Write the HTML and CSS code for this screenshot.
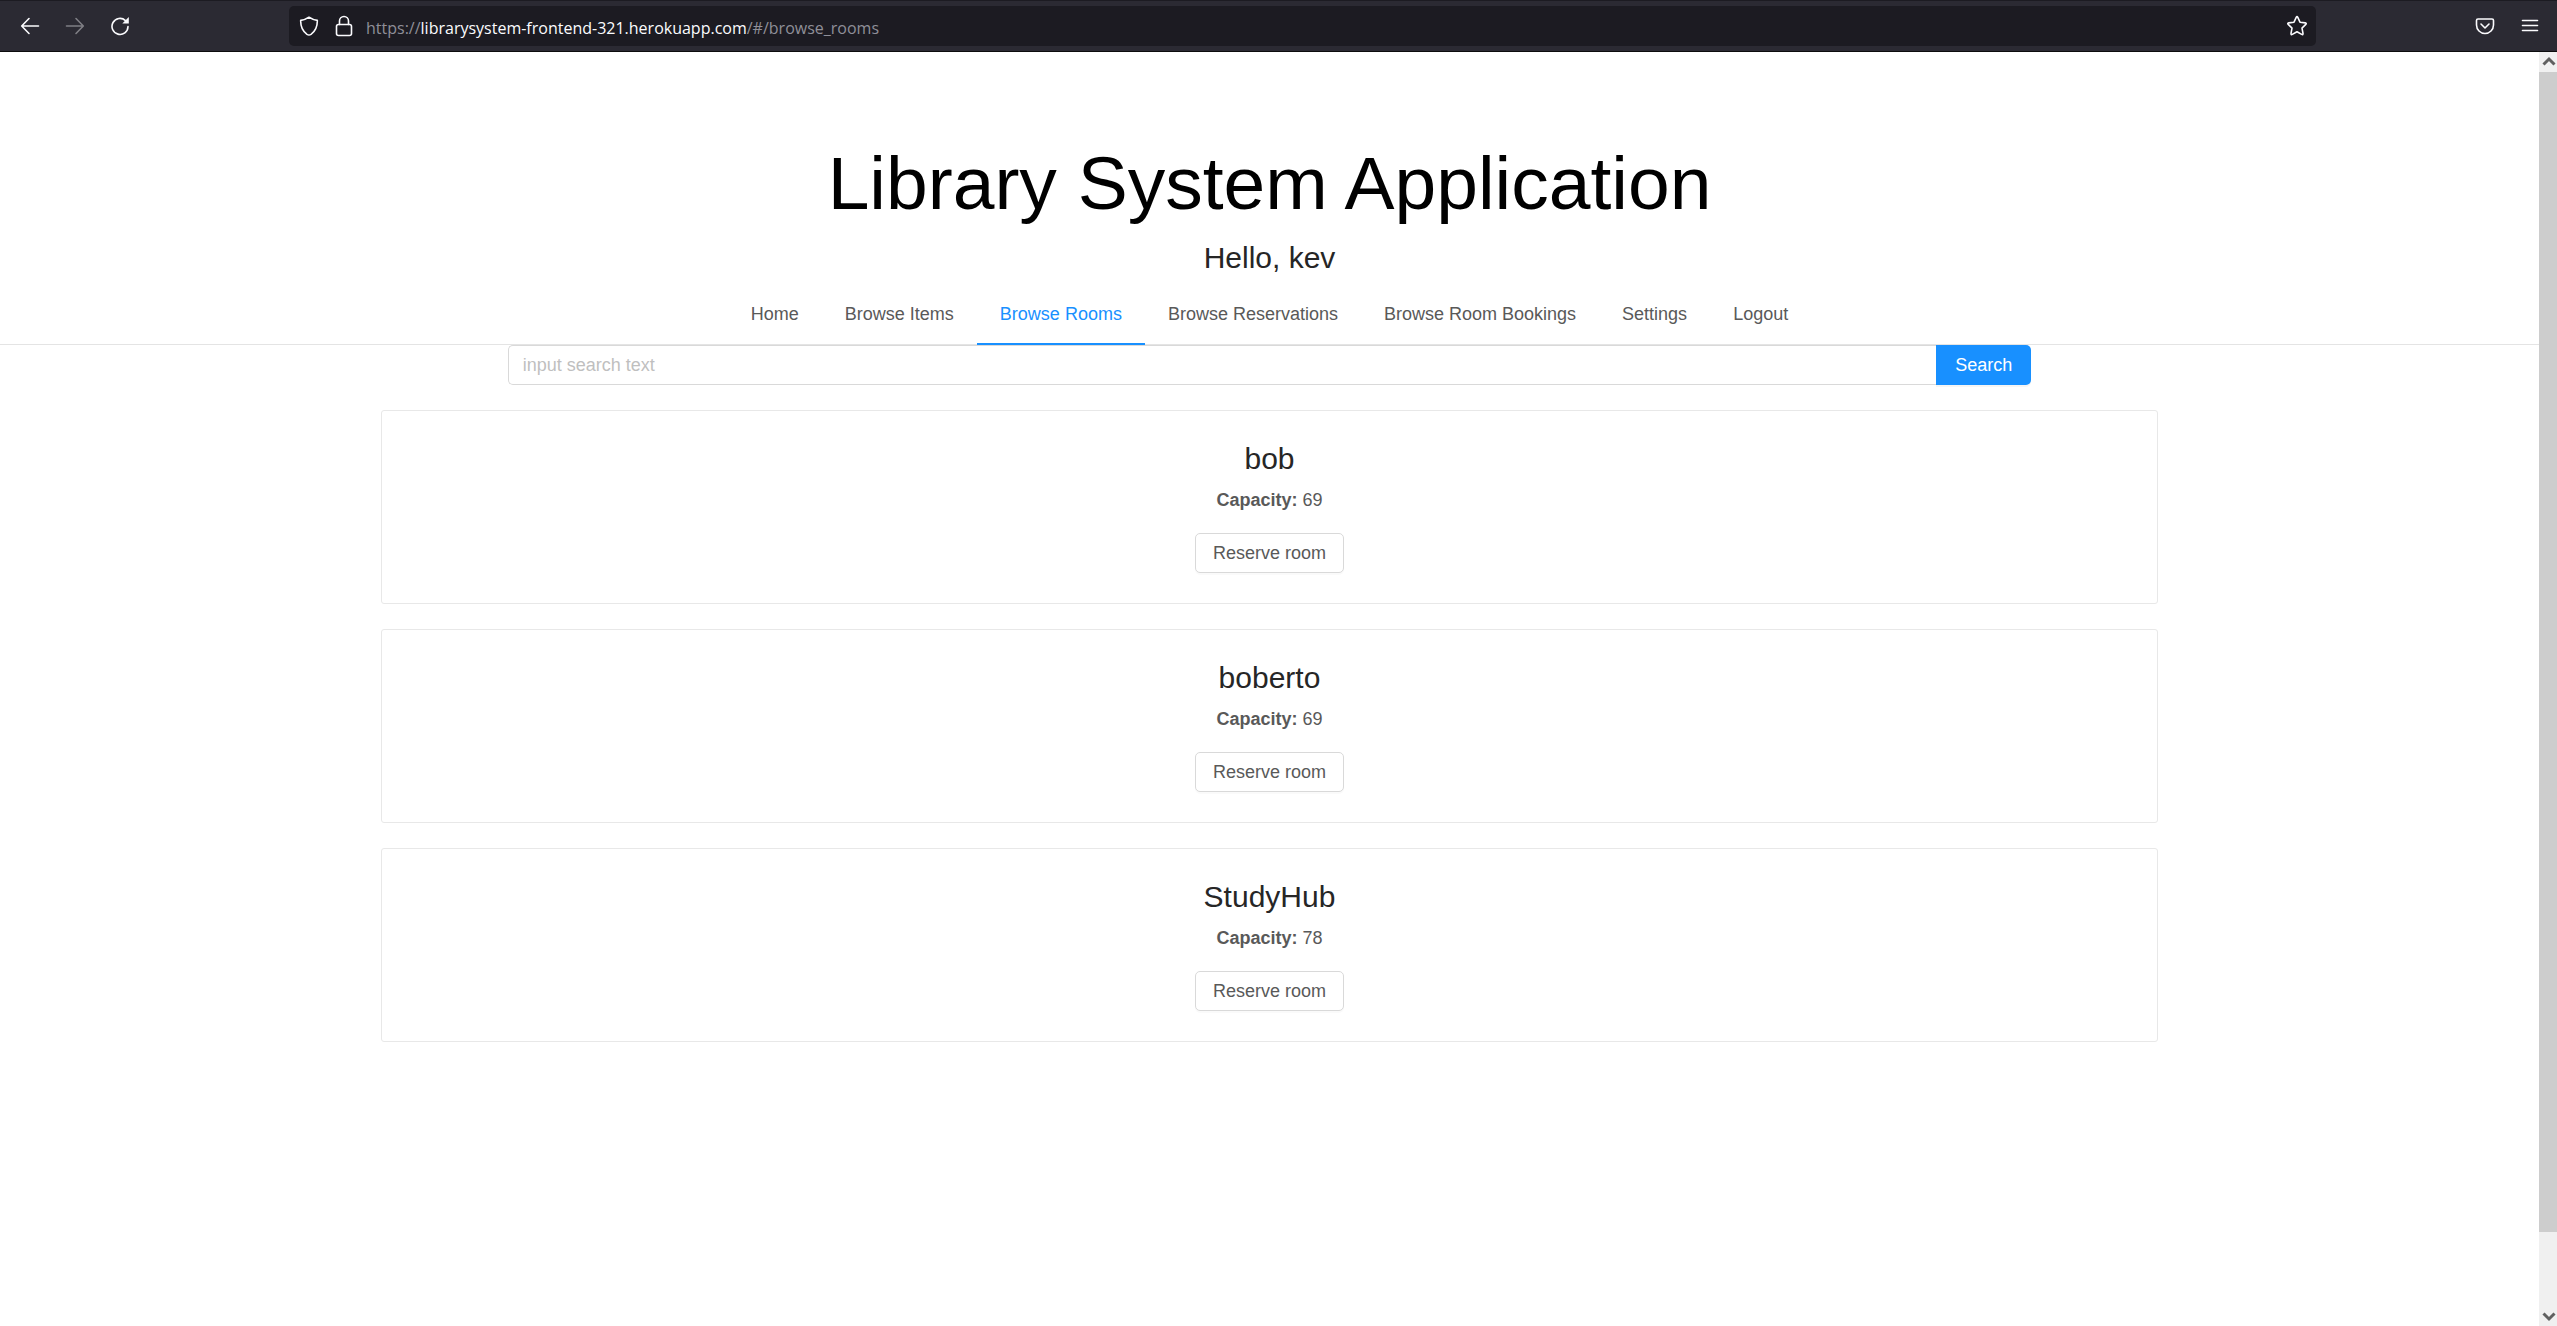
FILE: index.html
```html
<!DOCTYPE html>
<html lang="en">
<head>
<meta charset="utf-8">
<title>Library System Application</title>
<link rel="stylesheet" href="styles.css">
</head>
<body>
<div class="toolbar">
  <div class="nav-buttons">
    <button class="icon-button" aria-label="Back"><svg width="20" height="20" viewBox="0 0 20 20"><path d="M18.500 10H2M9 2.500 1.700 10 9 17.500"/></svg></button>
    <button class="icon-button dim" aria-label="Forward"><svg width="20" height="20" viewBox="0 0 20 20"><path d="M1.500 10H18M11 2.500 18.300 10 11 17.500"/></svg></button>
    <button class="icon-button" aria-label="Reload"><svg width="20" height="20" viewBox="0 0 20 20"><path d="M18 10.500A8 8 0 1 1 15.500 4.600"/><path class="solid" d="M18.800 1v6.500h-6.500z"/></svg></button>
  </div>
  <div class="address">
    <svg width="20" height="20" viewBox="0 0 20 20"><path d="M10 1.200C12.500 3 15 4 18.300 4.400C18.500 10.500 16.500 15 12 18.300Q10 19.600 8 18.300C3.500 15 1.500 10.500 1.700 4.400C5 4 7.500 3 10 1.200z"/></svg>
    <svg class="lock" width="20" height="22" viewBox="0 0 20 22"><rect x="2.500" y="9.500" width="15" height="11" rx="2"/><path d="M5.500 9.500V6a4.500 4.500 0 0 1 9 0v3.500"/></svg>
    <p class="url">https://<span class="host">librarysystem-frontend-321.herokuapp.com</span>/#/browse_rooms</p>
    <svg width="22" height="22" viewBox="0 0 22 22"><path d="M10.200 2.300q.8-1.500 1.600 0l2.200 4.900 5.300.7q1.600.3.500 1.500l-3.800 3.700 1 5.300q.2 1.700-1.300 1L11 16.800l-4.700 2.600q-1.500.7-1.300-1l1-5.300-3.800-3.700q-1.100-1.200.5-1.500l5.300-.7z"/></svg>
  </div>
  <div class="tools">
    <button class="icon-button" aria-label="Save to Pocket"><svg width="20" height="20" viewBox="0 0 20 20"><path d="M3 3h14q1.500 0 1.500 1.500V9a8.500 8.500 0 0 1-17 0V4.500Q1.500 3 3 3zM6 8l4 4 4-4"/></svg></button>
    <button class="icon-button" aria-label="Menu"><svg width="20" height="20" viewBox="0 0 20 20"><path d="M2.500 4.500h15M2.500 9.500h15M2.500 14.500h15"/></svg></button>
  </div>
</div>
<div class="viewport">
  <main class="page">
    <header>
      <h1>Library System Application</h1>
      <h2>Hello, kev</h2>
      <nav class="menu">
        <a href="#/">Home</a>
        <a href="#/browse_items">Browse Items</a>
        <a class="active" href="#/browse_rooms">Browse Rooms</a>
        <a href="#/browse_reservations">Browse Reservations</a>
        <a href="#/browse_room_bookings">Browse Room Bookings</a>
        <a href="#/settings">Settings</a>
        <a href="#/logout">Logout</a>
      </nav>
    </header>
    <form class="search">
      <input type="text" placeholder="input search text" aria-label="Search rooms">
      <button type="button">Search</button>
    </form>
    <section class="rooms">
      <article class="card">
        <h2>bob</h2>
        <p><strong>Capacity:</strong> 69</p>
        <button type="button">Reserve room</button>
      </article>
      <article class="card">
        <h2>boberto</h2>
        <p><strong>Capacity:</strong> 69</p>
        <button type="button">Reserve room</button>
      </article>
      <article class="card">
        <h2>StudyHub</h2>
        <p><strong>Capacity:</strong> 78</p>
        <button type="button">Reserve room</button>
      </article>
    </section>
  </main>
  <div class="scrollbar">
    <svg width="18" height="20" viewBox="0 0 18 20"><path d="M4.500 12.500 10 7l5.500 5.500"/></svg>
    <div class="thumb"></div>
    <div class="track"></div>
    <svg width="18" height="20" viewBox="0 0 18 20"><path d="M4.500 7.500 10 13l5.500-5.500"/></svg>
  </div>
</div>
</body>
</html>
```
FILE: styles.css
```css
* {
  box-sizing: border-box;
}

body {
  margin: 0;
  min-height: 100vh;
  display: flex;
  flex-direction: column;
  background: #fff;
  color: #595959;
  font: 18px/28px "Liberation Sans", Arial, sans-serif;
}

h1, h2, p {
  margin: 0;
}

button, input {
  font: inherit;
}

/* Browser toolbar */
.toolbar {
  display: flex;
  align-items: center;
  height: 52px;
  border-top: 1px solid #1c1b22;
  border-bottom: 1px solid #0c0c0d;
  background: #2b2a33;
}

.toolbar svg {
  display: block;
  flex: none;
  fill: none;
  stroke: #fbfbfe;
  stroke-width: 1.6;
  stroke-linecap: round;
  stroke-linejoin: round;
}

.toolbar .solid {
  fill: #fbfbfe;
  stroke: none;
}

.icon-button {
  padding: 0;
  border: 0;
  background: none;
}

.dim {
  opacity: 0.4;
}

.nav-buttons {
  display: flex;
  gap: 25px;
  width: 289px;
  padding-left: 20px;
}

.address {
  flex: 1;
  display: flex;
  align-items: center;
  height: 40px;
  padding: 0 8px 0 10px;
  border-radius: 5px;
  background: #1c1b22;
}

.lock {
  margin-left: 15px;
}

.url {
  flex: 1;
  margin-left: 12px;
  padding-top: 4px;
  color: #8f8f98;
  font: 16px/24px "Open Sans", "Noto Sans", sans-serif;
}

.host {
  color: #fbfbfe;
}

.tools {
  display: flex;
  justify-content: flex-end;
  gap: 25px;
  width: 241px;
  padding-right: 17px;
}

/* Page and its scrollbar */
.viewport {
  flex: 1;
  display: flex;
}

.page {
  flex: 1;
  text-align: center;
}

.scrollbar {
  width: 18px;
  display: flex;
  flex-direction: column;
  background: #f0f0f0;
}

.scrollbar svg {
  display: block;
  flex: none;
  fill: none;
  stroke: #606060;
  stroke-width: 3;
}

.thumb {
  flex: 94;
  background: #cdcdcd;
}

.track {
  flex: 6;
}

/* Header */
header {
  padding-top: 85px;
  border-bottom: 1px solid #e4e4e4;
}

h1 {
  color: #000;
  font-size: 75px;
  font-weight: 400;
  line-height: 92px;
}

h2 {
  color: #262626;
  font-size: 30px;
  font-weight: 400;
  line-height: 40px;
}

header h2 {
  margin-top: 9px;
}

.menu {
  display: flex;
  justify-content: center;
  margin-top: 9px;
  margin-bottom: -1px;
}

.menu a {
  height: 58px;
  padding: 0 23px;
  border-bottom: 2px solid transparent;
  color: inherit;
  line-height: 54px;
  text-decoration: none;
}

.menu .active {
  border-color: #1890ff;
  color: #1890ff;
}

/* Search */
.search {
  display: flex;
  width: 60%;
  height: 40px;
  margin: 0 auto;
}

.search input {
  flex: 1;
  min-width: 0;
  padding: 0 14px;
  border: 1px solid #d9d9d9;
  border-right: 0;
  border-radius: 5px 0 0 5px;
  color: #595959;
  outline: 0;
}

.search input::placeholder {
  color: #bfbfbf;
}

.search button {
  width: 95px;
  padding: 0;
  border: 0;
  border-radius: 0 5px 5px 0;
  background: #1890ff;
  box-shadow: 0 2px 0 rgba(0, 0, 0, 0.04);
  color: #fff;
}

/* Rooms */
.rooms {
  display: grid;
  gap: 25px;
  width: 70%;
  margin: 25px auto;
}

.card {
  padding: 28px 30px 30px;
  border: 1px solid #e8e8e8;
  border-radius: 3px;
}

.card p {
  margin: 7px 0 19px;
  line-height: 28px;
}

.card button {
  display: block;
  height: 40px;
  margin: 0 auto;
  padding: 0 17px;
  border: 1px solid #d9d9d9;
  border-radius: 5px;
  background: #fff;
  box-shadow: 0 2px 0 rgba(0, 0, 0, 0.02);
  color: inherit;
}
```
